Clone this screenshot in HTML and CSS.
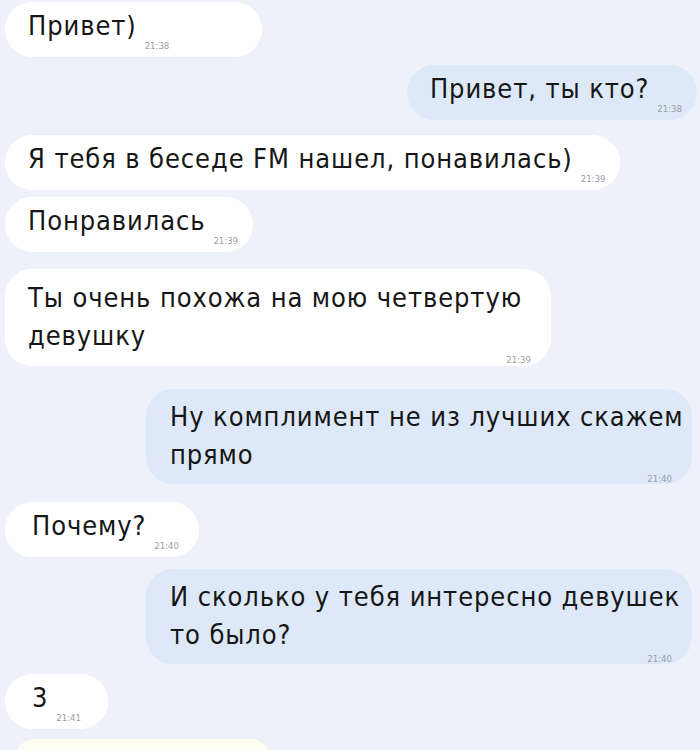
FILE: index.html
```html
<!DOCTYPE html>
<html lang="ru">
<head>
<meta charset="utf-8">
<title>Чат</title>
<link rel="stylesheet" href="styles.css">
</head>
<body>
<div class="chat">
  <div class="row in first">
    <div class="bubble wide-1"><span class="text">Привет)</span><span class="time">21:38</span></div>
  </div>
  <div class="row out gap-8">
    <div class="bubble"><span class="text">Привет, ты кто?</span><span class="time">21:38</span></div>
  </div>
  <div class="row in gap-15">
    <div class="bubble"><span class="text">Я тебя в беседе FM нашел, понавилась)</span><span class="time">21:39</span></div>
  </div>
  <div class="row in gap-7">
    <div class="bubble"><span class="text">Понравилась</span><span class="time">21:39</span></div>
  </div>
  <div class="row in gap-17">
    <div class="bubble multi"><span class="text">Ты очень похожа на мою четвертую девушку</span><span class="time">21:39</span></div>
  </div>
  <div class="row out gap-23">
    <div class="bubble multi"><span class="text">Ну комплимент не из лучших скажем прямо</span><span class="time">21:40</span></div>
  </div>
  <div class="row in gap-18">
    <div class="bubble loose"><span class="text">Почему?</span><span class="time">21:40</span></div>
  </div>
  <div class="row out gap-12">
    <div class="bubble multi"><span class="text">И сколько у тебя интересно девушек то было?</span><span class="time">21:40</span></div>
  </div>
  <div class="row in">
    <div class="bubble loose wide-9"><span class="text">3</span><span class="time">21:41</span></div>
  </div>
  <div class="row in">
    <div class="bubble sticker"></div>
  </div>
</div>
</body>
</html>
```

FILE: styles.css
```css
html, body {
  margin: 0;
  padding: 0;
  height: 100%;
  overflow: hidden;
}

body {
  background: #eef1fa;
  font-family: "DejaVu Sans Condensed", "DejaVu Sans", sans-serif;
  color: #161616;
}

.chat {
  display: flex;
  flex-direction: column;
  padding: 2px 3px 0 5px;
}

.row {
  display: flex;
  margin-top: 10px;
}

.row.first { margin-top: 0; }
.row.gap-7 { margin-top: 7px; }
.row.gap-8 { margin-top: 8px; }
.row.gap-12 { margin-top: 12px; }
.row.gap-15 { margin-top: 15px; }
.row.gap-17 { margin-top: 17px; }
.row.gap-18 { margin-top: 18px; }
.row.gap-23 { margin-top: 23px; }

.row.out { justify-content: flex-end; }

.bubble {
  display: flex;
  align-items: flex-end;
  background: #ffffff;
  border-radius: 27px;
  padding: 5px 15px 12px 23px;
  box-sizing: border-box;
}

.row.out .bubble {
  background: #dde9f8;
}

.text {
  font-size: 27px;
  line-height: 38px;
  letter-spacing: 0.9px;
}

.time {
  font-size: 9.5px;
  line-height: 10px;
  color: #9a9ea6;
  margin: 0 0 -6px 8px;
  white-space: nowrap;
}

.bubble.multi {
  flex-direction: column;
  align-items: stretch;
  max-width: 546px;
  padding: 10px 6px 1px 23px;
}

.row.out .bubble.multi {
  margin-right: 5px;
  padding: 9px 6px 0 24px;
}

.bubble.multi .time {
  align-self: flex-end;
  margin: 0 14px 0 0;
}

.bubble.loose {
  padding-left: 27px;
  padding-right: 20px;
}

.bubble.wide-1 { min-width: 257px; }
.bubble.wide-9 { min-width: 103px; }

.bubble.sticker {
  margin-left: 10px;
  width: 255px;
  height: 40px;
  background: #fffcf0;
}
```
